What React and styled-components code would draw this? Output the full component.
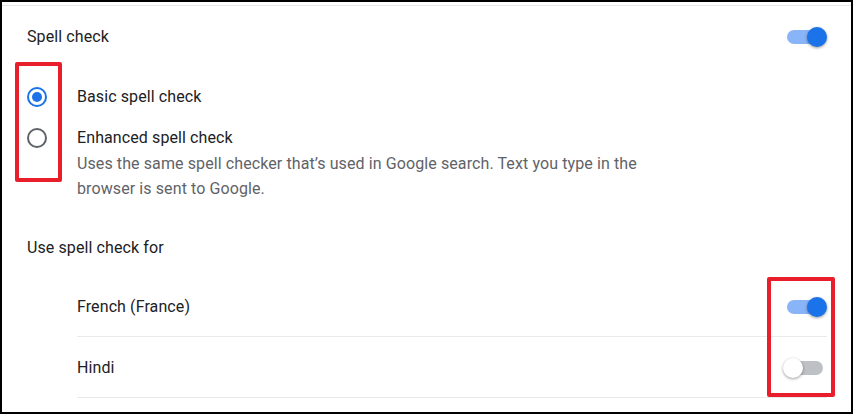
import React from 'react'
import styled, { createGlobalStyle } from 'styled-components'

const Global = createGlobalStyle`
  body {
    margin: 0;
    background: #fff;
    font-family: Roboto, "Liberation Sans", Arial, sans-serif;
  }
`

const Frame = styled.div`
  position: relative;
  box-sizing: border-box;
  width: 853px;
  height: 414px;
  border: 2px solid #000;
  padding-top: 3px;
  overflow: hidden;
  background: #fff;
`

const Card = styled.div`
  border-top: 1px solid #e8e8e8;
  padding: 0 24px 0 25px;
  color: #202124;
  font-size: 16px;
  letter-spacing: 0.1px;
`

const Header = styled.div`
  display: flex;
  align-items: center;
  justify-content: space-between;
  height: 61px;
`

const Label = styled.div`
  line-height: 24px;
  color: #202124;
`

const RadioList = styled.div`
  display: flex;
  flex-direction: column;
  gap: 17px;
  padding-top: 18px;
`

const RadioRow = styled.div`
  display: flex;
  align-items: flex-start;
  gap: 30px;
`

const RadioCircle = styled.div`
  box-sizing: border-box;
  width: 20px;
  height: 20px;
  margin-top: 2px;
  flex: none;
  border-radius: 50%;
  border: 2px solid ${(p) => (p.checked ? '#1a73e8' : '#5f6368')};
  display: flex;
  align-items: center;
  justify-content: center;

  &::after {
    content: '';
    width: 10px;
    height: 10px;
    border-radius: 50%;
    background: ${(p) => (p.checked ? '#1a73e8' : 'transparent')};
  }
`

const Description = styled.div`
  color: #5f6368;
  line-height: 25px;
  width: 575px;
  margin-top: 1px;
`

const SubHeader = styled(Label)`
  margin-top: 35px;
`

const LangList = styled.div`
  margin: 16px 0 0 50px;
`

const LangRow = styled.div`
  display: flex;
  align-items: center;
  justify-content: space-between;
  height: 61px;
  padding-top: 1px;
  box-sizing: border-box;
  border-bottom: 1px solid #e8eaed;
`

const Switch = styled.div`
  position: relative;
  width: 44px;
  height: 20px;
  flex: none;
`

const Track = styled.div`
  position: absolute;
  left: 4px;
  right: 4px;
  top: 3px;
  height: 14px;
  border-radius: 7px;
  background: ${(p) => (p.on ? '#8ab4f8' : '#bdc1c6')};
`

const Knob = styled.div`
  position: absolute;
  top: 0;
  ${(p) => (p.on ? 'right: 0;' : 'left: 0;')}
  width: 20px;
  height: 20px;
  border-radius: 50%;
  background: ${(p) => (p.on ? '#1a73e8' : '#ffffff')};
  box-shadow: 0 1px 3px rgba(0, 0, 0, 0.4);
`

const Highlight = styled.div`
  position: absolute;
  box-sizing: border-box;
  border: 4px solid #e81f2a;
  border-radius: 2px;
  left: ${(p) => p.x}px;
  top: ${(p) => p.y}px;
  width: ${(p) => p.w}px;
  height: ${(p) => p.h}px;
`

const Toggle = ({ on }) => (
  <Switch>
    <Track on={on ? 1 : 0} />
    <Knob on={on ? 1 : 0} />
  </Switch>
)

const languages = [
  { name: 'French (France)', on: true },
  { name: 'Hindi', on: false },
]

export default function App() {
  return (
    <>
      <Global />
      <Frame>
        <Card>
          <Header>
            <Label>Spell check</Label>
            <Toggle on />
          </Header>

          <RadioList>
            <RadioRow>
              <RadioCircle checked />
              <Label>Basic spell check</Label>
            </RadioRow>
            <RadioRow>
              <RadioCircle />
              <div>
                <Label>Enhanced spell check</Label>
                <Description>
                  Uses the same spell checker that’s used in Google search. Text you type in the
                  browser is sent to Google.
                </Description>
              </div>
            </RadioRow>
          </RadioList>

          <SubHeader>Use spell check for</SubHeader>

          <LangList>
            {languages.map((lang) => (
              <LangRow key={lang.name}>
                <Label>{lang.name}</Label>
                <Toggle on={lang.on} />
              </LangRow>
            ))}
          </LangList>
        </Card>

        <Highlight x={13} y={60} w={47} h={120} />
        <Highlight x={765} y={275} w={68} h={120} />
      </Frame>
    </>
  )
}
